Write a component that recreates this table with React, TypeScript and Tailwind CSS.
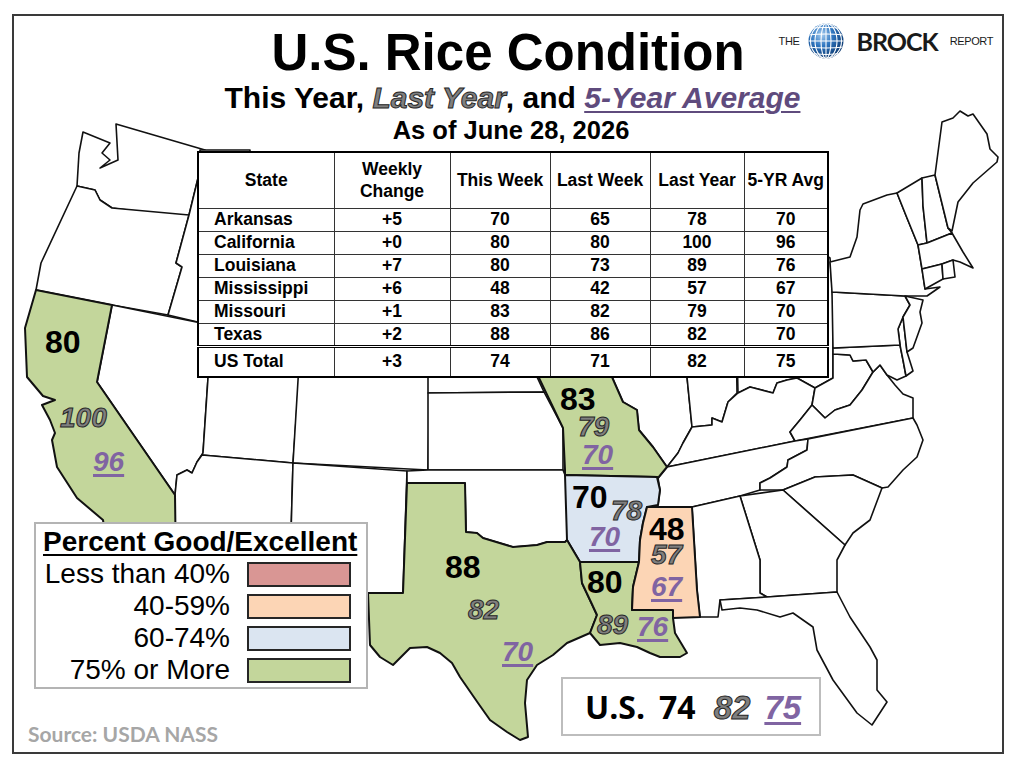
import React from 'react'

// Map outlines are drawn in page pixels; the svg viewBox starts at the frame's inner corner.
const whiteStates = [
  '83,132 110,143 102,153 110,160 100,168 118,160 116,124 205,150 200,170 189,215 184,217 112,208 100,200 95,190 77,186 79,153',
  '77,186 95,190 100,200 112,208 189,215 176,263 182,267 168,315 112,305 36,290 41,263',
  '200,150 250,150 250,200 240,240 260,270 275,300 300,310 300,328 206,324 168,315 182,267 176,263 189,215 200,170',
  '112,305 206,324 208,378 203,453 197,462 192,473 187,470 177,475 175,495 97,382',
  '206,324 262,330 262,360 299,364 299,378 293,463 202,455 203,453 208,378',
  '202,455 293,463 290,570 230,590 175,570 175,495 177,475 187,470 192,473 197,462',
  '299,364 430,368 428,470 293,463',
  '293,463 407,471 403,593 368,593 368,610 320,605 290,605 290,570',
  '380,330 520,330 537,377 544,392 428,393 428,368 380,366',
  '428,393 544,392 563,428 563,470 428,470',
  '407,471 428,470 563,470 565,475 567,475 567,540 565,542 547,542 537,545 513,547 483,538 477,533 466,532 465,483 407,483',
  '600,240 680,240 687,377 692,427 683,443 678,453 667,467 653,447 639,430 637,410 623,402 612,377 608,360',
  '680,255 735,255 737,393 728,402 722,422 712,418 712,425 692,427 687,377',
  '735,255 810,245 830,258 833,300 833,354 833,378 815,388 797,378 787,380 777,383 773,393 750,387 738,393',
  '667,467 678,453 683,443 692,427 712,425 712,418 722,422 728,402 738,393 750,387 773,393 777,383 787,380 797,378 815,388 812,405 800,420 790,432 795,441',
  '815,388 833,378 833,354 850,355 853,361 866,360 873,372 862,390 850,405 835,410 825,418 812,405',
  '795,441 790,432 800,420 812,405 825,418 835,410 850,405 862,390 873,372 880,365 887,375 895,385 903,394 913,398 913,418',
  '833,348 900,345 903,360 906,376 897,380 887,375 880,365 873,372 866,360 853,361 850,355 833,354',
  '898,329 903,317 907,352 913,371 906,376 903,360 900,345',
  '832,292 905,296 910,305 903,317 898,329 900,345 833,348',
  '830,262 850,257 857,237 860,210 863,204 887,195 897,193 907,218 918,245 922,269 925,289 940,287 927,296 905,296 832,292',
  '905,296 923,300 920,312 922,323 913,348 907,352 903,317 910,305',
  '897,193 922,178 923,206 927,243 918,245 907,218',
  '922,178 935,175 948,228 952,233 927,243 923,206',
  '935,175 942,122 953,118 960,111 968,116 973,114 987,134 990,149 998,157 997,162 973,183 958,202 952,231 948,228',
  '918,245 927,243 952,233 963,252 973,268 960,262 953,260 942,264 922,269',
  '922,269 942,264 943,279 925,289',
  '942,264 953,260 955,277 943,279',
  '658,478 667,467 795,441 808,439 807,450 788,460 787,467 770,478 760,483 760,490 740,496 692,507 647,507 658,505 660,490',
  '808,439 913,418 917,425 923,440 917,457 903,470 888,487 882,488 853,475 815,477 783,490 760,490 760,483 770,478 787,467 788,460 807,450',
  '783,490 815,477 853,475 882,488 870,520 853,533 845,545',
  '740,496 783,490 845,545 837,560 837,592 767,597 760,593 760,560',
  '692,507 740,496 760,560 760,593 767,597 720,600 718,617 700,617 697,590',
  '720,600 767,597 837,592 850,617 870,647 877,660 877,690 887,702 872,725 857,713 833,680 817,650 813,627 793,613 780,617 757,610 740,608 722,610',
]

const riceStates = [
  { fill: '#c3d69b', pts: '36,290 112,305 97,382 175,495 176,570 110,570 103,520 77,498 57,467 52,440 55,433 50,420 42,405 55,400 43,396 27,377 25,328' },
  { fill: '#c3d69b', pts: '528,355 608,355 612,377 623,402 637,410 639,430 653,447 667,467 658,478 657,477 565,475 565,470 563,428' },
  { fill: '#dbe5f1', pts: '565,475 657,477 660,490 658,505 647,507 643,523 640,540 639,562 580,562 567,540' },
  { fill: '#c3d69b', pts: '407,483 465,483 466,532 477,533 483,538 513,547 537,545 547,542 565,542 567,540 580,562 582,583 590,600 597,615 590,633 567,643 553,655 537,665 527,680 525,703 528,737 520,740 507,732 490,720 478,703 460,677 452,663 440,653 427,647 410,648 393,665 380,657 370,645 368,593 403,593' },
  { fill: '#c3d69b', pts: '580,562 639,562 633,587 632,610 673,610 673,618 675,633 687,653 680,657 660,657 650,653 637,647 620,643 600,645 590,633 597,615 590,600 582,583' },
  { fill: '#fcd5b5', pts: '647,507 692,507 697,590 700,617 673,618 673,610 632,610 633,587 639,562 640,540 643,523' },
]

const nowCls = 'absolute text-[32px] leading-[26px] font-bold text-black'
const lastCls = 'absolute text-[28px] leading-[24px] font-bold italic text-[#7f7f7f] [-webkit-text-stroke:1px_#262626]'
const avgCls = 'absolute text-[28px] leading-[24px] font-bold italic text-[#8064a2] underline decoration-[3px] underline-offset-[3px]'

const mapLabels = [
  { t: '80', c: nowCls + ' left-[31px] top-[313px]' },
  { t: '100', c: lastCls + ' left-[46px] top-[390px]' },
  { t: '96', c: avgCls + ' left-[79px] top-[434px]' },
  { t: '83', c: nowCls + ' left-[546px] top-[370px]' },
  { t: '79', c: lastCls + ' left-[564px] top-[399px]' },
  { t: '70', c: avgCls + ' left-[568px] top-[427px]' },
  { t: '70', c: nowCls + ' left-[558px] top-[468px]' },
  { t: '78', c: lastCls + ' left-[597px] top-[483px]' },
  { t: '70', c: avgCls + ' left-[575px] top-[509px]' },
  { t: '48', c: nowCls + ' left-[635px] top-[500px]' },
  { t: '57', c: lastCls + ' left-[637px] top-[527px]' },
  { t: '67', c: avgCls + ' left-[637px] top-[559px]' },
  { t: '80', c: nowCls + ' left-[573px] top-[553px]' },
  { t: '89', c: lastCls + ' left-[583px] top-[597px]' },
  { t: '76', c: avgCls + ' left-[623px] top-[599px]' },
  { t: '88', c: nowCls + ' left-[431px] top-[538px]' },
  { t: '82', c: lastCls + ' left-[454px] top-[582px]' },
  { t: '70', c: avgCls + ' left-[488px] top-[624px]' },
]

const rows = [
  ['Arkansas', '+5', '70', '65', '78', '70'],
  ['California', '+0', '80', '80', '100', '96'],
  ['Louisiana', '+7', '80', '73', '89', '76'],
  ['Mississippi', '+6', '48', '42', '57', '67'],
  ['Missouri', '+1', '83', '82', '79', '70'],
  ['Texas', '+2', '88', '86', '82', '70'],
]
const total = ['US Total', '+3', '74', '71', '82', '75']

const legend = [
  { label: 'Less than 40%', color: 'bg-[#d99694]' },
  { label: '40-59%', color: 'bg-[#fcd5b5]' },
  { label: '60-74%', color: 'bg-[#dbe5f1]' },
  { label: '75% or More', color: 'bg-[#c3d69b]' },
]

function Globe() {
  return (
    <svg width="36" height="36" viewBox="0 0 36 36">
      <defs>
        <radialGradient id="globeFill" cx="38%" cy="32%" r="70%">
          <stop offset="0%" stopColor="#a7cdf0" />
          <stop offset="45%" stopColor="#2f76c0" />
          <stop offset="100%" stopColor="#0b386f" />
        </radialGradient>
        <clipPath id="globeClip">
          <circle cx="18" cy="18" r="17.5" />
        </clipPath>
      </defs>
      <circle cx="18" cy="18" r="17.5" fill="url(#globeFill)" />
      <g clipPath="url(#globeClip)" stroke="#ffffff" strokeWidth="1.1" fill="none">
        <ellipse cx="18" cy="18" rx="5" ry="17.5" />
        <ellipse cx="18" cy="18" rx="11" ry="17.5" />
        <ellipse cx="18" cy="18" rx="15.5" ry="17.5" />
        <line x1="18" y1="0" x2="18" y2="36" />
        <path d="M0 6 Q18 3 36 6 M0 12 Q18 10 36 12 M0 18 H36 M0 24 Q18 26 36 24 M0 30 Q18 33 36 30" />
      </g>
    </svg>
  )
}

function Logo() {
  return (
    <div className="flex items-center -mt-[4px] pr-[9px] text-[#1a1a1a]">
      <span className="text-[11px] leading-none tracking-[-0.3px]">THE</span>
      <span className="ml-[8px]">
        <Globe />
      </span>
      <span className="ml-[13px] text-[25px] leading-none font-bold tracking-[-1px] font-['Lato','Liberation_Sans',sans-serif]">
        BROCK
      </span>
      <span className="ml-[12px] text-[11px] leading-none tracking-[-0.4px]">REPORT</span>
    </div>
  )
}

function ConditionTable() {
  const cell = 'border border-[#333]'
  return (
    <table className="table-fixed border-collapse border-2 border-black bg-white w-[630px] text-[17.5px] font-bold leading-none">
      <colgroup>
        <col className="w-[136px]" />
        <col className="w-[116px]" />
        <col className="w-[100px]" />
        <col className="w-[100px]" />
        <col className="w-[94px]" />
        <col className="w-[84px]" />
      </colgroup>
      <thead>
        <tr className="h-[57px]">
          <th className={cell}>State</th>
          <th className={cell + ' leading-[22px]'}>
            Weekly
            <br />
            Change
          </th>
          <th className={cell}>This Week</th>
          <th className={cell}>Last Week</th>
          <th className={cell}>Last Year</th>
          <th className={cell + ' whitespace-nowrap'}>5-YR Avg</th>
        </tr>
      </thead>
      <tbody>
        {rows.map((r) => (
          <tr key={r[0]} className="h-[23px]">
            {r.map((v, i) => (
              <td key={i} className={cell + (i === 0 ? ' text-left pl-[15px]' : ' text-center')}>
                {v}
              </td>
            ))}
          </tr>
        ))}
        <tr className="h-[30px]">
          {total.map((v, i) => (
            <td
              key={i}
              className={
                'border border-[#333] border-t-[3px] border-t-black border-double' +
                (i === 0 ? ' text-left pl-[15px]' : ' text-center')
              }
            >
              {v}
            </td>
          ))}
        </tr>
      </tbody>
    </table>
  )
}

export default function App() {
  return (
    <div className="w-[1024px] h-[765px] bg-white overflow-hidden font-['Liberation_Sans',Arial,sans-serif] text-black">
      <div className="relative mt-[14px] ml-[12px] w-[992px] h-[740px] border-2 border-[#3a3a3a] overflow-hidden">
        <svg className="absolute inset-0" width="988" height="736" viewBox="14 16 988 736">
          {whiteStates.map((p, i) => (
            <polygon key={i} points={p} fill="#ffffff" stroke="#111" strokeWidth="1.6" strokeLinejoin="round" />
          ))}
          {riceStates.map((s, i) => (
            <polygon key={i} points={s.pts} fill={s.fill} stroke="#111" strokeWidth="2" strokeLinejoin="round" />
          ))}
        </svg>

        {mapLabels.map((l, i) => (
          <span key={i} className={l.c}>
            {l.t}
          </span>
        ))}

        <div className="relative flex flex-col h-full">
          <div className="grid grid-cols-[1fr_auto_1fr] items-start mt-[11px]">
            <div />
            <h1 className="text-[51px] leading-none font-bold">U.S. Rice Condition</h1>
            <div className="flex justify-end">
              <Logo />
            </div>
          </div>

          <p className="mt-[5px] pl-[9px] text-center text-[30px] leading-none font-bold">
            This Year,{' '}
            <span className="italic text-[#7f7f7f] [-webkit-text-stroke:1px_#262626]">Last Year</span>, and{' '}
            <span className="italic text-[#5f4b7d] underline decoration-2 underline-offset-[3px]">5-Year Average</span>
          </p>
          <p className="mt-[5px] pl-[6px] text-center text-[25.5px] leading-none font-bold">As of June 28, 2026</p>

          <div className="mt-[7px] ml-[183px]">
            <ConditionTable />
          </div>

          <div className="mt-auto flex items-end">
            <div className="flex flex-col">
              <div className="ml-[20px] w-[334px] border-2 border-[#b4b4b4] bg-white pl-[7px] pr-[15px] pt-[4px] pb-[1px]">
                <div className="whitespace-nowrap text-[28px] leading-none font-bold underline decoration-2 underline-offset-[3px]">
                  Percent Good/Excellent
                </div>
                <div className="mt-[2px] flex flex-col">
                  {legend.map((l) => (
                    <div key={l.label} className="h-[32px] flex items-center justify-end gap-[17px]">
                      <span className="text-[28px] leading-none whitespace-nowrap">{l.label}</span>
                      <span className={'w-[104px] h-[25px] border-2 border-[#262626] ' + l.color} />
                    </div>
                  ))}
                </div>
              </div>
              <p className="ml-[14px] mt-[34px] mb-[8px] text-[21px] leading-none font-bold text-[#a6a6a6] font-['Lato','Open_Sans',sans-serif]">
                Source: USDA NASS
              </p>
            </div>

            <div className="ml-[193px] mb-[16px] w-[260px] h-[59px] border-2 border-[#bdbdbd] bg-white flex items-baseline pl-[22px] pt-[12px]">
              <span className="text-[32px] leading-none font-bold font-['Open_Sans',sans-serif]">U.S.</span>
              <span className="ml-[14px] text-[32px] leading-none font-bold font-['Open_Sans',sans-serif]">74</span>
              <span className="ml-[18px] text-[33px] leading-none font-bold italic text-[#7f7f7f] [-webkit-text-stroke:1px_#262626]">
                82
              </span>
              <span className="ml-[14px] text-[33px] leading-none font-bold italic text-[#8064a2] underline decoration-[3px] underline-offset-[3px]">
                75
              </span>
            </div>
          </div>
        </div>
      </div>
    </div>
  )
}
